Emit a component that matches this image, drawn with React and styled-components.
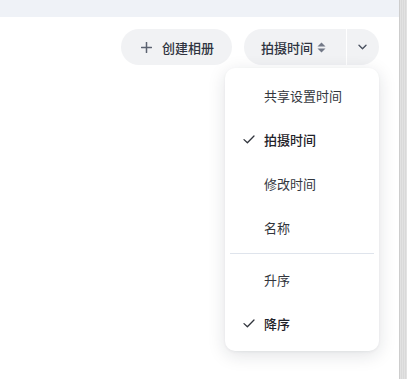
import React, { useState } from 'react'
import styled, { createGlobalStyle } from 'styled-components'

const GlobalStyle = createGlobalStyle`
  html, body { margin: 0; padding: 0; height: 100%; }
  body {
    font-family: Inter, "Noto Sans CJK SC", sans-serif;
    background: #fff;
    color: #2b2f38;
  }
  #root { height: 100%; }
`

const sortOptions = ['共享设置时间', '拍摄时间', '修改时间', '名称']
const orderOptions = ['升序', '降序']

const PlusIcon = () => (
  <svg width="11" height="11" viewBox="0 0 11 11" fill="none">
    <path d="M5.5 0.5v10M0.5 5.5h10" stroke="#5b6270" strokeWidth="1.5" strokeLinecap="round" />
  </svg>
)

const SortIcon = () => (
  <svg width="9" height="11" viewBox="0 0 9 11">
    <path d="M4.5 0.5L8.5 4.6H0.5z" fill="#737987" />
    <path d="M4.5 10.5L8.5 6.4H0.5z" fill="#737987" />
  </svg>
)

const ChevronIcon = () => (
  <svg width="9" height="6" viewBox="0 0 9 6" fill="none">
    <path d="M1 1.2l3.5 3.5L8 1.2" stroke="#4b5260" strokeWidth="1.4" strokeLinecap="round" strokeLinejoin="round" />
  </svg>
)

const CheckIcon = () => (
  <svg width="12" height="9" viewBox="0 0 12 9" fill="none">
    <path d="M1 4.6l3.4 3.2L11 1" stroke="#30343c" strokeWidth="1.3" strokeLinecap="round" strokeLinejoin="round" />
  </svg>
)

const App = () => {
  const [sortBy, setSortBy] = useState('拍摄时间')
  const [order, setOrder] = useState('降序')

  return (
    <>
      <GlobalStyle />
      <StyledPage>
        <StyledMain>
          <StyledTopBar />
          <StyledToolbar>
            <StyledPill>
              <PlusIcon />
              <span>创建相册</span>
            </StyledPill>
            <StyledSortGroup>
              <StyledSplit>
                <StyledSplitMain>
                  <span>{sortBy}</span>
                  <SortIcon />
                </StyledSplitMain>
                <StyledSplitToggle>
                  <ChevronIcon />
                </StyledSplitToggle>
              </StyledSplit>
              <StyledMenu>
                {sortOptions.map((label) => (
                  <MenuItem key={label} label={label} checked={label === sortBy} onClick={() => setSortBy(label)} />
                ))}
                <StyledDivider />
                {orderOptions.map((label) => (
                  <MenuItem key={label} label={label} checked={label === order} onClick={() => setOrder(label)} />
                ))}
              </StyledMenu>
            </StyledSortGroup>
          </StyledToolbar>
        </StyledMain>
        <StyledScrollbar />
      </StyledPage>
    </>
  )
}

const MenuItem = ({ label, checked, onClick }) => (
  <StyledItem $checked={checked} onClick={onClick}>
    <StyledCheckSlot>{checked && <CheckIcon />}</StyledCheckSlot>
    <span>{label}</span>
  </StyledItem>
)

const StyledPage = styled.div`
  height: 100%;
  display: flex;
`

const StyledMain = styled.main`
  flex: 1;
  display: flex;
  flex-direction: column;
`

const StyledTopBar = styled.div`
  height: 17px;
  background-color: #eff2f7;
`

const StyledToolbar = styled.div`
  display: flex;
  justify-content: flex-end;
  align-items: flex-start;
  gap: 12px;
  padding: 12px 20px 0;
`

const StyledPill = styled.button`
  height: 36px;
  border: none;
  border-radius: 18px;
  padding: 0 18px 0 20px;
  background-color: #f1f2f4;
  display: flex;
  align-items: center;
  gap: 10px;
  font: inherit;
  font-size: 13px;
  font-weight: 500;
  color: #2f3441;
  cursor: pointer;
`

const StyledSortGroup = styled.div`
  position: relative;
`

const StyledSplit = styled.div`
  height: 36px;
  display: flex;
  border-radius: 18px;
  overflow: hidden;
  background-color: #f1f2f4;
`

const StyledSplitMain = styled.button`
  border: none;
  background: transparent;
  padding: 0 20px 0 17px;
  display: flex;
  align-items: center;
  gap: 4px;
  font: inherit;
  font-size: 13px;
  font-weight: 500;
  color: #2f3441;
  border-right: 1px solid #fff;
  cursor: pointer;
`

const StyledSplitToggle = styled.button`
  width: 32px;
  border: none;
  background: transparent;
  padding: 0 2px 0 0;
  display: flex;
  align-items: center;
  justify-content: center;
  cursor: pointer;
`

const StyledMenu = styled.div`
  position: absolute;
  top: 39px;
  right: 0;
  width: 154px;
  padding: 5px 0 6px;
  background-color: #fff;
  border-radius: 10px;
  box-shadow: 0 4px 18px rgba(20, 30, 50, 0.13), 0 1px 3px rgba(20, 30, 50, 0.05);
  box-sizing: border-box;
`

const StyledItem = styled.div`
  height: 44px;
  display: flex;
  align-items: center;
  padding-left: 18px;
  font-size: 13px;
  font-weight: ${(props) => (props.$checked ? 500 : 400)};
  color: ${(props) => (props.$checked ? '#1f2229' : '#33363d')};
  cursor: pointer;
`

const StyledCheckSlot = styled.span`
  width: 21px;
  display: flex;
  align-items: center;
`

const StyledDivider = styled.div`
  height: 1px;
  margin: 4px 5px 3px;
  background-color: #dfe4ec;
`

const StyledScrollbar = styled.div`
  width: 7px;
  border-left: 1px solid #cdcdcd;
  background: repeating-linear-gradient(90deg, #e2e2e2 0 1px, #d9d9d9 1px 2px);
`

export default App
